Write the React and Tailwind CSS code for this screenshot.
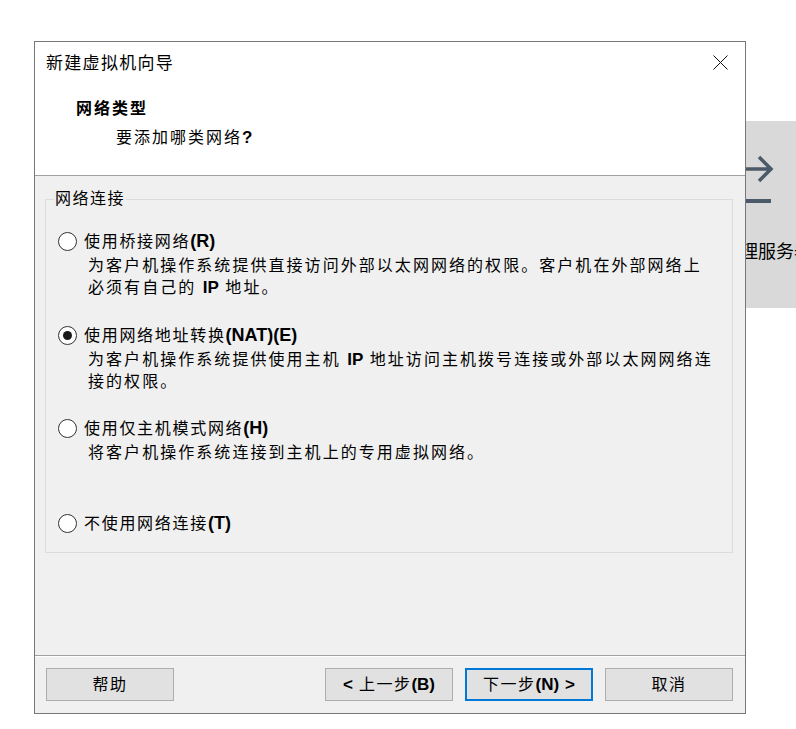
const Latin = ({ children, className = "text-[17px]" }) => (
  <span className={className + " font-bold tracking-normal"}>{children}</span>
);

function Radio({ checked, label, latin, lines, className = "" }) {
  return (
    <div className={className}>
      <div className="flex h-[22px] items-center">
        <span className="flex h-[19px] w-[19px] shrink-0 items-center justify-center rounded-full border border-[#333] bg-white">
          {checked && <span className="h-[9px] w-[9px] rounded-full bg-[#1a1a1a]" />}
        </span>
        <span className="ml-[7px] whitespace-nowrap text-[16px] leading-[22px] tracking-[1.7px]">
          {label}
          <Latin className="text-[18px]">{latin}</Latin>
        </span>
      </div>
      {lines && (
        <div className="ml-[30px] mt-[3px] whitespace-nowrap text-[16px] leading-[22px] tracking-[2.05px]">
          {lines.map((l, i) => (
            <div key={i}>{l}</div>
          ))}
        </div>
      )}
    </div>
  );
}

function Button({ children, primary }) {
  return (
    <button
      className={
        "flex h-[33px] w-[128px] items-center justify-center bg-[#e1e1e1] text-[16px] leading-[22px] tracking-[1.5px] " +
        (primary ? "border-2 border-[#0078d7]" : "border border-[#adadad]")
      }
    >
      {children}
    </button>
  );
}

export default function App() {
  return (
    <div className="relative h-[729px] w-[796px] overflow-hidden bg-white pl-[34px] pt-[41px] font-['Liberation_Sans','Noto_Sans_CJK_SC',sans-serif] text-black">
      {/* window behind the wizard */}
      <div className="absolute left-[700px] top-[121px] h-[187px] w-[120px] bg-[#d9d9d9]">
        <svg className="absolute left-0 top-0" width="120" height="120" viewBox="0 0 120 120" fill="none">
          <path d="M20 48H71M59 36l12 12-12 12" stroke="#4b5a68" strokeWidth="3.5" />
          <path d="M20 80H71" stroke="#4b5a68" strokeWidth="4" />
        </svg>
        <span className="absolute left-[22px] top-[120px] whitespace-nowrap text-[18px] leading-[22px]">管理服务器</span>
      </div>

      <div className="relative z-10 flex h-[673px] w-[712px] flex-col border border-[#777] bg-[#f0f0f0]">
        <div className="relative h-[134px] shrink-0 border-b border-[#a0a0a0] bg-white">
          <div className="pl-[11px] pt-[11px] text-[17px] leading-[22px] tracking-[1.3px]">新建虚拟机向导</div>
          <svg className="absolute left-[678px] top-[13px]" width="15" height="15" viewBox="0 0 15 15">
            <path d="M0.5 0.5l14 14M14.5 0.5l-14 14" stroke="#111" strokeWidth="1" />
          </svg>
          <div className="mt-[23px] pl-[41px] text-[16px] font-bold leading-[22px] tracking-[2px]">网络类型</div>
          <div className="mt-[7px] pl-[81px] text-[16px] leading-[22px] tracking-[2px]">
            要添加哪类网络<Latin>?</Latin>
          </div>
        </div>

        <div className="flex-1">
          <fieldset className="ml-[10px] mt-[12px] w-[688px] border border-[#dcdcdc] pb-[18px]">
            <legend className="ml-[8px] px-[1px] text-[16px] leading-[22px] tracking-[1.5px]">网络连接</legend>
            <div className="pl-[12px] pt-[20px]">
              <Radio
                label="使用桥接网络"
                latin="(R)"
                lines={[
                  "为客户机操作系统提供直接访问外部以太网网络的权限。客户机在外部网络上",
                  <>必须有自己的 <Latin>IP</Latin> 地址。</>,
                ]}
              />
              <Radio
                className="mt-[25px]"
                checked
                label="使用网络地址转换"
                latin="(NAT)(E)"
                lines={[
                  <>为客户机操作系统提供使用主机 <Latin>IP</Latin> 地址访问主机拨号连接或外部以太网网络连</>,
                  "接的权限。",
                ]}
              />
              <Radio
                className="mt-[24px]"
                label="使用仅主机模式网络"
                latin="(H)"
                lines={["将客户机操作系统连接到主机上的专用虚拟网络。"]}
              />
              <Radio className="mt-[48px]" label="不使用网络连接" latin="(T)" />
            </div>
          </fieldset>
        </div>

        <div className="flex h-[58px] shrink-0 items-start gap-[12px] border-t border-[#a0a0a0] pl-[11px] pr-[12px] pt-[12px] shadow-[inset_0_1px_0_#fff]">
          <Button>帮助</Button>
          <div className="flex-1" />
          <Button>
            <Latin>&lt;</Latin>&nbsp;上一步<Latin>(B)</Latin>
          </Button>
          <Button primary>
            下一步<Latin>(N)</Latin>&nbsp;<Latin>&gt;</Latin>
          </Button>
          <Button>取消</Button>
        </div>
      </div>
    </div>
  );
}
